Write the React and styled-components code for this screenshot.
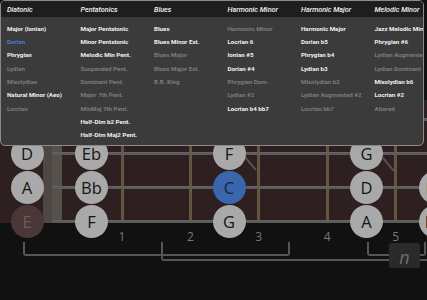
import React from "react";
import styled, { createGlobalStyle } from "styled-components";

const Global = createGlobalStyle`
  html, body {
    margin: 0;
    padding: 0;
    background: #111111;
    width: 427px;
    height: 300px;
    overflow: hidden;
  }
`;

const Page = styled.div`
  position: relative;
  width: 427px;
  height: 300px;
  overflow: hidden;
  background: #111111;
  font-family: "Open Sans", "Noto Sans", sans-serif;
`;

/* ---------- scale menu (dropdown over the fretboard) ---------- */

const Menu = styled.div`
  position: absolute;
  top: 0;
  left: 0;
  z-index: 5;
  width: 424px;
  height: 146px;
  box-sizing: border-box;
  border: 1px solid #8a8a8a;
  border-radius: 5px;
  background: #3b3b3b;
  overflow: hidden;
`;

const MenuHead = styled.div`
  display: grid;
  grid-template-columns: repeat(6, 73.5px);
  align-items: center;
  height: 16px;
  padding-left: 6px;
  background: #1e1e1e;
`;

const HeadCell = styled.div`
  font-family: Roboto, "Open Sans", sans-serif;
  font-style: italic;
  font-weight: 500;
  font-size: 7.2px;
  color: #f4f4f4;
  white-space: nowrap;
`;

const MenuBody = styled.div`
  display: grid;
  grid-template-columns: repeat(6, 73.5px);
  padding: 5px 0 0 6px;
`;

const Column = styled.div`
  display: flex;
  flex-direction: column;
`;

const tones = {
  on: "#f0f0f0",
  off: "#7c7c7c",
  sel: "#4b7bd1",
};

const Item = styled.div`
  display: flex;
  align-items: center;
  flex: none;
  height: 13.33px;
  line-height: 1;
  font-family: Roboto, "Open Sans", sans-serif;
  font-weight: 700;
  font-size: 6.2px;
  color: ${(p) => tones[p.$tone]};
  white-space: nowrap;
`;

/* ---------- fretboard ---------- */

const Board = styled.div`
  position: relative;
  display: flex;
  margin-top: 100px;
  height: 123px;
  background: #2e2020;
`;

const OpenCol = styled.div`
  width: 43px;
  flex: none;
`;

const Nut = styled.div`
  width: 19px;
  flex: none;
  background: linear-gradient(90deg, #4d4843 0 50%, #57514b 50% 100%);
`;

const Fret = styled.div`
  flex: none;
  width: ${(p) => p.$w}px;
  box-sizing: border-box;
  border-right: 3px solid #65563f;
`;

const StringLine = styled.div`
  position: absolute;
  left: 52px;
  right: 0;
  height: 3px;
  background: #5b5b5b;
  border-top: 1px solid #646464;
  box-sizing: border-box;
`;

const noteColors = {
  plain: { bg: "#a9a9a9", fg: "#151515" },
  root: { bg: "#3a66ae", fg: "#14233d" },
  out: { bg: "#4a3838", fg: "#6e5a5a" },
};

const Note = styled.div`
  position: absolute;
  width: 33px;
  height: 33px;
  margin: -16.5px 0 0 -16.5px;
  border-radius: 50%;
  display: flex;
  align-items: center;
  justify-content: center;
  background: ${(p) => noteColors[p.$kind].bg};
  color: ${(p) => noteColors[p.$kind].fg};
  font-family: "Open Sans", sans-serif;
  font-size: 16.5px;
  font-weight: 500;
  z-index: 2;
`;

const Marks = styled.svg`
  position: absolute;
  left: 0;
  top: 0;
  z-index: 1;
`;

const Numbers = styled.div`
  position: relative;
  height: 14px;
  margin-top: 5px;
`;

const Num = styled.span`
  position: absolute;
  top: 0;
  width: 20px;
  margin-left: -10px;
  text-align: center;
  font-family: "Open Sans", sans-serif;
  font-size: 12px;
  line-height: 17px;
  color: #777777;
`;

const Ranges = styled.div`
  position: relative;
  height: 30px;
`;

const Bracket = styled.div`
  position: absolute;
  top: 0;
  left: ${(p) => p.$x}px;
  width: ${(p) => p.$w}px;
  height: ${(p) => p.$h}px;
  box-sizing: border-box;
  border: 2px solid #565656;
  border-top: none;
  border-right-width: ${(p) => (p.$open ? 0 : 2)}px;
  border-radius: 0 0 ${(p) => (p.$open ? 0 : 3)}px 3px;
`;

const NameButton = styled.div`
  position: absolute;
  left: 389px;
  top: 243px;
  width: 31px;
  height: 25px;
  border-radius: 3px;
  background: #2a2a2a;
  display: flex;
  align-items: center;
  justify-content: center;
  font-family: "Open Sans", sans-serif;
  font-style: italic;
  font-size: 18px;
  line-height: 1;
  padding-top: 2px;
  box-sizing: border-box;
  color: #6c6c6c;
  z-index: 3;
`;

const columns = [
  {
    title: "Diatonic",
    items: [
      ["Major (Ionian)", "on"],
      ["Dorian", "sel"],
      ["Phrygian", "on"],
      ["Lydian", "off"],
      ["Mixolydian", "off"],
      ["Natural Minor (Aeo)", "on"],
      ["Locrian", "off"],
    ],
  },
  {
    title: "Pentatonics",
    items: [
      ["Major Pentatonic", "on"],
      ["Minor Pentatonic", "on"],
      ["Melodic Min Pent.", "on"],
      ["Suspended Pent.", "off"],
      ["Dominant Pent.", "off"],
      ["Major 7th Pent.", "off"],
      ["MinMaj 7th Pent.", "off"],
      ["Half-Dim b2 Pent.", "on"],
      ["Half-Dim Maj2 Pent.", "on"],
    ],
  },
  {
    title: "Blues",
    items: [
      ["Blues", "on"],
      ["Blues Minor Ext.", "on"],
      ["Blues Major", "off"],
      ["Blues Major Ext.", "off"],
      ["B.B. King", "off"],
    ],
  },
  {
    title: "Harmonic Minor",
    items: [
      ["Harmonic Minor", "off"],
      ["Locrian 6", "on"],
      ["Ionian #5", "on"],
      ["Dorian #4", "on"],
      ["Phrygian Dom.", "off"],
      ["Lydian #2", "off"],
      ["Locrian b4 bb7", "on"],
    ],
  },
  {
    title: "Harmonic Major",
    items: [
      ["Harmonic Major", "on"],
      ["Dorian b5", "on"],
      ["Phrygian b4", "on"],
      ["Lydian b3", "on"],
      ["Mixolydian b2", "off"],
      ["Lydian Augmented #2", "off"],
      ["Locrian bb7", "off"],
    ],
  },
  {
    title: "Melodic Minor",
    items: [
      ["Jazz Melodic Minor", "on"],
      ["Phrygian #6", "on"],
      ["Lydian Augmented", "off"],
      ["Lydian Dominant", "off"],
      ["Mixolydian b6", "on"],
      ["Locrian #2", "on"],
      ["Altered", "off"],
    ],
  },
];

// string centre lines, relative to board top
const strings = [19, 53, 87, 121];

// x of each note column (open string, then fret n)
const noteX = (fret) => (fret === 0 ? 27 : 91.5 + 68.75 * (fret - 1));

const notes = [
  [0, 0, "G"], [0, 2, "A"], [0, 3, "Bb"], [0, 5, "C"],
  [1, 0, "D"], [1, 1, "Eb"], [1, 3, "F"], [1, 5, "G"],
  [2, 0, "A"], [2, 1, "Bb"], [2, 3, "C", "root"], [2, 5, "D"], [2, 6, "Eb"],
  [3, 0, "E", "out"], [3, 1, "F"], [3, 3, "G"], [3, 5, "A"], [3, 6, "Bb"],
];

const wires = [122, 190.4, 258.8, 327.2, 395.6];

export default function App() {
  return (
    <Page>
      <Global />

      <Board>
        <OpenCol />
        <Nut />
        <Fret $w={61.5} />
        <Fret $w={68.4} />
        <Fret $w={68.4} />
        <Fret $w={68.4} />
        <Fret $w={68.4} />
        <Fret $w={68.4} />
        {strings.map((y) => (
          <StringLine key={y} style={{ top: y - 1.5 }} />
        ))}
        <Marks width="427" height="123">
          <line x1="245" y1="57" x2="256" y2="70" stroke="#5a5049" strokeWidth="2" />
          <line x1="383" y1="58" x2="394" y2="71" stroke="#5a5049" strokeWidth="2" />
        </Marks>
        {notes.map(([s, f, name, kind]) => (
          <Note
            key={`${s}-${f}`}
            $kind={kind || "plain"}
            style={{ left: noteX(f), top: strings[s] }}
          >
            {name}
          </Note>
        ))}
      </Board>

      <Numbers>
        {wires.map((x, i) => (
          <Num key={x} style={{ left: x }}>
            {i + 1}
          </Num>
        ))}
      </Numbers>

      <Ranges>
        <Bracket $x={23} $w={267} $h={14} />
        <Bracket $x={161} $w={300} $h={19} $open />
        <Bracket $x={367} $w={59} $h={14} />
      </Ranges>

      <NameButton>n</NameButton>

      <Menu>
        <MenuHead>
          {columns.map((c) => (
            <HeadCell key={c.title}>{c.title}</HeadCell>
          ))}
        </MenuHead>
        <MenuBody>
          {columns.map((c) => (
            <Column key={c.title}>
              {c.items.map(([label, tone]) => (
                <Item key={label} $tone={tone}>
                  {label}
                </Item>
              ))}
            </Column>
          ))}
        </MenuBody>
      </Menu>
    </Page>
  );
}
